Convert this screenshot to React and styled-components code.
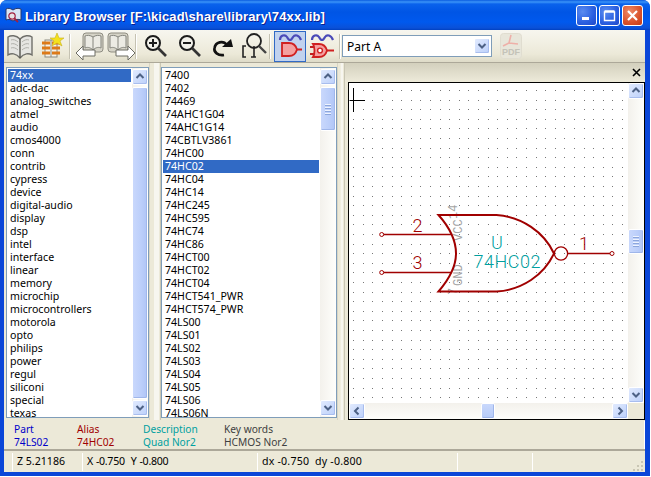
import React from 'react';
import styled, { createGlobalStyle } from 'styled-components';

const cream = '#ece9d8';
const uiFont = '"Noto Sans", "Liberation Sans", sans-serif';

const GlobalStyle = createGlobalStyle`
    html, body {
        margin: 0;
        background: #fff;
    }
    body {
        font-family: ${uiFont};
        font-size: 10.6px;
    }
`;

const Window = styled.div`
    width: 650px;
    height: 476px;
    display: flex;
    flex-flow: column nowrap;
    background: #0a46d8;
    border-radius: 7px 7px 0 0;
    overflow: hidden;
`;

const TitleBar = styled.div`
    height: 30px;
    flex: none;
    display: flex;
    align-items: center;
    padding: 0 7px 0 5px;
    background: linear-gradient(180deg, #0a5ce0 0, #3b94f8 2px, #0a62ec 4px, #0055e5 12px, #0059ee 22px, #0a50d8 28px, #0040c0 30px);
`;

const TitleText = styled.div`
    flex: 1;
    margin: 2px 0 0 3px;
    color: #fff;
    font: bold 13px "Liberation Sans", sans-serif;
    letter-spacing: .12px;
    white-space: nowrap;
    text-shadow: 1px 1px 0 #0f1e8c;
`;

const CaptionButton = styled.div`
    width: 21px;
    height: 21px;
    margin-left: 2px;
    box-sizing: border-box;
    border: 1px solid #fff;
    border-radius: 3px;
    display: flex;
    align-items: center;
    justify-content: center;
    background: ${props => props.$close
        ? 'radial-gradient(circle at 35% 30%, #ee8a68, #d9512a 60%, #c23a14)'
        : 'radial-gradient(circle at 30% 30%, #5a8cf0, #2a5fe0 60%, #1e48c8)'};
`;

const Client = styled.div`
    flex: 1;
    min-height: 0;
    margin: 0 5px 0 4px;
    display: flex;
    flex-flow: column nowrap;
    background: ${cream};
`;

const Toolbar = styled.div`
    height: 33px;
    flex: none;
    display: flex;
    align-items: center;
    box-sizing: border-box;
    background: linear-gradient(180deg, #f7f6ef, #ece9d8 75%, #dedbc8);
    border-bottom: 1px solid #aca899;
`;

const ToolButton = styled.div`
    width: ${props => props.$width || 32}px;
    height: 31px;
    flex: none;
    box-sizing: border-box;
    margin-left: ${props => props.$gap || 0}px;
    display: flex;
    align-items: center;
    justify-content: center;
    border: 1px solid ${props => props.$active ? '#316ac5' : 'transparent'};
    background: ${props => props.$active ? '#c1d2ee' : 'transparent'};
    & svg {
        flex: none;
    }
`;

const ToolSeparator = styled.div`
    width: 1px;
    height: 25px;
    flex: none;
    margin: 0 1px;
    background: #c5c2b2;
    border-right: 1px solid #fff;
`;

const Select = styled.div`
    width: 150px;
    height: 22px;
    flex: none;
    box-sizing: border-box;
    display: flex;
    align-items: center;
    justify-content: space-between;
    padding: 1px 1px 1px 4px;
    border: 1px solid #7f9db9;
    background: #fff;
    font-size: 12px;
    color: #000;
`;

const Main = styled.div`
    flex: 1;
    min-height: 0;
    display: flex;
`;

const ListColumn = styled.div`
    width: ${props => props.$width}px;
    flex: none;
    margin-left: ${props => props.$left || 0}px;
    padding: 4px 0 2px;
    box-sizing: border-box;
    display: flex;
`;

const ListBox = styled.div`
    flex: 1;
    min-width: 0;
    box-sizing: border-box;
    display: flex;
    border: 1px solid #7f9db9;
    background: #fff;
`;

const Rows = styled.div`
    flex: 1;
    min-width: 0;
    padding: 1px;
    overflow: hidden;
`;

const Row = styled.div`
    height: 13px;
    line-height: 13px;
    padding-left: 2px;
    white-space: nowrap;
    color: ${props => props.$selected ? '#fff' : '#000'};
    background: ${props => props.$selected ? '#316ac5' : 'transparent'};
`;

const Sash = styled.div`
    width: ${props => props.$width}px;
    flex: none;
    box-sizing: border-box;
    border-left: 1px solid #d8d5c4;
    border-right: 1px solid #c9c6b4;
    background: linear-gradient(90deg, ${cream} 40%, #f7f6ef 45%, #f7f6ef 85%, ${cream} 90%);
`;

const CanvasPane = styled.div`
    flex: 1;
    min-width: 0;
    display: flex;
    flex-flow: column nowrap;
    padding-left: 3px;
    background: linear-gradient(180deg, #d3d0bd 0, ${cream} 18px);
`;

const PaneHeader = styled.div`
    height: 19px;
    flex: none;
    display: flex;
    align-items: center;
    justify-content: flex-end;
    padding-right: 4px;
`;

const CanvasFrame = styled.div`
    flex: 1;
    min-height: 0;
    display: grid;
    grid-template-columns: 1fr 16px;
    grid-template-rows: 1fr 16px;
    border: 1px solid #000;
    background: ${cream};
`;

const Sheet = styled.svg`
    display: block;
    width: 279px;
    height: 320px;
    background: #fff;
`;

const VTrack = styled.div`
    width: 16px;
    flex: none;
    display: flex;
    flex-flow: column nowrap;
    padding-top: ${props => props.$inset || 0}px;
    padding-bottom: ${props => props.$inset || 0}px;
    background: linear-gradient(90deg, #f3f1ec, #fefefb);
`;

const HTrack = styled.div`
    height: 16px;
    display: flex;
    background: linear-gradient(180deg, #f3f1ec, #fefefb);
`;

const ScrollButton = styled.div`
    width: 16px;
    height: 16px;
    flex: none;
    box-sizing: border-box;
    display: flex;
    align-items: center;
    justify-content: center;
    border: 1px solid #fff;
    border-radius: 2px;
    background: linear-gradient(135deg, #e1eafe, #bcd0fa);
    box-shadow: inset -1px -1px 0 #a8bdee;
`;

const VThumb = styled.div`
    height: ${props => props.$size}px;
    margin-top: ${props => props.$offset}px;
    margin-bottom: auto;
    flex: none;
    box-sizing: border-box;
    display: flex;
    flex-flow: column nowrap;
    align-items: center;
    justify-content: center;
    gap: 1px;
    border: 1px solid #fff;
    border-radius: 2px;
    background: linear-gradient(90deg, #c9d8fc, #bbcefa 60%, #b0c5f6);
    box-shadow: inset -1px -1px 0 #9fb6ea;
`;

const HThumb = styled.div`
    width: ${props => props.$size}px;
    margin-left: ${props => props.$offset}px;
    margin-right: auto;
    flex: none;
    box-sizing: border-box;
    border: 1px solid #fff;
    border-radius: 2px;
    background: linear-gradient(180deg, #c9d8fc, #b6cbf8);
    box-shadow: inset -1px -1px 0 #9fb6ea;
`;

const GripLine = styled.div`
    width: 6px;
    height: 1px;
    background: #eef3fe;
    border-bottom: 1px solid #8ca6dc;
`;

const MessagePanel = styled.div`
    height: 28px;
    flex: none;
    margin-top: 1px;
    display: flex;
    padding-left: 10px;
    border-right: 1px solid #fff;
    line-height: 13px;
    font-size: 10.2px;
`;

const MessageCol = styled.div`
    width: ${props => props.$width}px;
    flex: none;
    color: ${props => props.$color};
    padding-top: 2px;
`;

const StatusBar = styled.div`
    height: 23px;
    flex: none;
    box-sizing: border-box;
    display: flex;
    align-items: stretch;
    padding-left: 8px;
    border-top: 2px solid #aca899;
    position: relative;
`;

const StatusField = styled.div`
    width: ${props => props.$width}px;
    flex: none;
    box-sizing: border-box;
    padding-left: 4px;
    margin: 2px 0 1px;
    line-height: 17px;
    letter-spacing: ${props => props.$spacing || 0}px;
    word-spacing: ${props => props.$words || 0}px;
    color: #000;
    border-left: 1px solid #fff;
    white-space: pre;
`;

const Grip = styled.svg`
    position: absolute;
    right: 1px;
    bottom: 0;
`;

const BottomEdge = styled.div`
    height: 4px;
    flex: none;
`;

const Chevron = ({ dir }) => {
    const paths = {
        up: 'M1.5 6 L5 2.5 L8.5 6',
        down: 'M1.5 3 L5 6.5 L8.5 3',
        left: 'M6.5 1.5 L3 5 L6.5 8.5',
        right: 'M3.5 1.5 L7 5 L3.5 8.5',
    };
    return (
        <svg width="10" height="10" viewBox="0 0 10 10">
            <path d={paths[dir]} fill="none" stroke="#4d6185" strokeWidth="2" />
        </svg>
    );
};

function VScroll({ offset, size, grip, inset }) {
    return (
        <VTrack $inset={inset}>
            <ScrollButton><Chevron dir="up" /></ScrollButton>
            <VThumb $offset={offset} $size={size}>
                {grip && <><GripLine /><GripLine /><GripLine /><GripLine /></>}
            </VThumb>
            <ScrollButton><Chevron dir="down" /></ScrollButton>
        </VTrack>
    );
}

const BookIcon = () => (
    <svg width="28" height="28" viewBox="0 0 28 28">
        <path d="M14 7 C10 3 5 3 2 5 L2 23 C5 21 10 21 14 26 C18 21 23 21 26 23 L26 5 C23 3 18 3 14 7 Z" fill="#e6e6e2" stroke="#6f6f6a" strokeWidth="1.4" />
        <path d="M14 7 L14 26" stroke="#55554f" strokeWidth="1.4" />
        <path d="M5 8 C7 7 10 8 12 10 M5 12 C7 11 10 12 12 14 M5 16 C7 15 10 16 12 18 M23 8 C21 7 18 8 16 10 M23 12 C21 11 18 12 16 14 M23 16 C21 15 18 16 16 18" stroke="#b0b0aa" fill="none" />
    </svg>
);

const LibNewIcon = () => (
    <svg width="26" height="28" viewBox="0 0 26 28">
        <rect x="6" y="8" width="12" height="17" fill="#f4f2ea" stroke="#8a8a80" />
        <path d="M12 8 V25" stroke="#8a8a80" />
        <path d="M3 11 H11 M3 16 H11 M3 21 H11 M13 11 H21 M13 16 H21 M13 21 H21" stroke="#dd7a18" strokeWidth="3" />
        <path d="M18 1 L20 6 L25 6 L21 9 L23 14 L18 11 L13 14 L15 9 L11 6 L16 6 Z" fill="#f5e21c" stroke="#c8b020" strokeWidth=".6" />
    </svg>
);

const BookArrowIcon = ({ flip }) => (
    <svg width="30" height="30" viewBox="0 0 30 30">
        <g transform={flip ? 'translate(30 0) scale(-1 1)' : undefined}>
            <rect x="8" y="2" width="20" height="19" rx="3" fill="#d6d4c8" stroke="#8f8d82" />
            <path d="M18 6 C15 4 12 4 10 5 L10 17 C12 16 15 16 18 19 C21 16 24 16 26 17 L26 5 C24 4 21 4 18 6 Z" fill="#ecebe4" stroke="#84847c" />
            <path d="M18 6 V19" stroke="#84847c" />
            <path d="M1 22 L8 15 L8 19 L20 19 L20 25 L8 25 L8 29 Z" fill="#fff" stroke="#6c6c64" strokeLinejoin="round" />
        </g>
    </svg>
);

const ZoomIcon = ({ sign }) => (
    <svg width="24" height="24" viewBox="0 0 24 24">
        <circle cx="9" cy="9" r="7" fill="#f2f1ea" stroke="#1c1c1c" strokeWidth="2" />
        <path d="M14 14 L22 22" stroke="#333" strokeWidth="2.6" />
        <path d="M5 9 H13" stroke="#1c1c1c" strokeWidth="2" />
        {sign === 'plus' && <path d="M9 5 V13" stroke="#1c1c1c" strokeWidth="2" />}
    </svg>
);

const RedoIcon = () => (
    <svg width="24" height="24" viewBox="0 0 24 24">
        <path d="M13 21 C7 22 2.5 18 3.5 14 C4.5 8 12 6 16 11" fill="none" stroke="#111" strokeWidth="2.6" />
        <path d="M11 13 L22 13 L20 5 Z" fill="#111" />
    </svg>
);

const ZoomBoxIcon = () => (
    <svg width="26" height="28" viewBox="0 0 26 28">
        <circle cx="13" cy="9" r="7" fill="none" stroke="#222" strokeWidth="1.8" />
        <path d="M18 14 L25 21" stroke="#444" strokeWidth="2.4" />
        <path d="M5 14 H2 V25 H5 M13 14 V25 M10 25 H15" fill="none" stroke="#222" strokeWidth="1.6" />
    </svg>
);

const GateIcon = ({ bubble }) => (
    <svg width="28" height="28" viewBox="0 0 28 28">
        <path d="M4 8 C4 3 9 2 11 5 C13 9 15 9 17 5 C19 2 23 3 25 8" fill="none" stroke="#4a4ab8" strokeWidth="2.2" />
        {bubble && <path d="M2 15 H7 M2 22 H7" stroke="#c02020" strokeWidth="2" />}
        <path d={bubble ? 'M5 12 H11 C15 12 18 15 19 18.5 C18 22 15 25 11 25 H5 C7 22 7 15 5 12 Z' : 'M6 11 H13 C17 11 20 14 21 17.5 C20 21 17 24 13 24 H6 Z'} fill="#f4a0a0" stroke="#d02020" strokeWidth="1.8" />
        <path d={bubble ? 'M19 18.5 H26' : 'M21 17.5 H26'} stroke="#d02020" strokeWidth="2" />
        {bubble && <circle cx="12" cy="18.5" r="2.4" fill="#fff" stroke="#d02020" strokeWidth="1.4" />}
    </svg>
);

const PdfIcon = () => (
    <svg width="22" height="26" viewBox="0 0 22 26">
        <rect x=".5" y=".5" width="21" height="25" rx="3" fill="#e8e6da" stroke="#e0ddd0" />
        <path d="M11 2 L9 10 L3 13 M9 10 L18 11" fill="none" stroke="#eeb0a8" strokeWidth="1.6" />
        <text x="11" y="22" textAnchor="middle" fontSize="9" fontFamily="Liberation Sans, sans-serif" fontWeight="bold" fill="#c4c2b8">PDF</text>
    </svg>
);

const AppIcon = () => (
    <svg width="17" height="17" viewBox="0 0 17 17">
        <path d="M8 3 C5 1 3 1 1 2 L1 13 C3 12 5 12 8 14 C11 12 13 12 16 13 L16 2 C13 1 11 1 8 3 Z" fill="#d8e4f4" stroke="#25386e" />
        <circle cx="7" cy="9" r="3.2" fill="#e8e0e4" stroke="#a02040" strokeWidth="1.2" />
        <path d="M9 11 L13 15" stroke="#a02040" strokeWidth="1.8" />
    </svg>
);

const dots = [];
for (let i = -1; i < 28; i++) {
    for (let j = 0; j < 33; j++) {
        dots.push([Math.round(362.7 + i * 9.6), Math.round(90 + j * 9.6)]);
    }
}

const RED = '#a00000';
const TEAL = '#00a0a0';
const GRAY = '#a4a4a4';
const THIN = 'Roboto, "Liberation Sans", sans-serif';
const MONO = '"Liberation Mono", monospace';

const FieldLabel = styled.text`
    font-family: ${THIN};
    font-weight: 300;
    text-anchor: middle;
    font-size: ${props => props.$size}px;
    fill: ${props => props.$color};
`;

const PinName = styled.text`
    font-family: ${MONO};
    font-size: 12px;
    fill: ${GRAY};
`;

function Schematic() {
    return (
        <Sheet viewBox="349 83 279 320">
            {dots.map(([x, y]) => (
                <rect key={`${x}-${y}`} x={x} y={y} width="1" height="1" fill="#777" />
            ))}
            <path d="M349.5 100.5 H365 M353.5 88 V112" stroke="#000" fill="none" />

            <path d="M382 234.5 H452 M382 272.5 H452 M568 253.5 H612" stroke={RED} strokeWidth="1.3" fill="none" />
            <circle cx="381.7" cy="234.5" r="2" fill="#fff" stroke={RED} />
            <circle cx="381.7" cy="272.5" r="2" fill="#fff" stroke={RED} />
            <circle cx="612" cy="253.5" r="2" fill="#fff" stroke={RED} />
            <circle cx="561" cy="253.5" r="6.6" fill="none" stroke={RED} strokeWidth="1.3" />

            <FieldLabel x="417.5" y="232" $size={18} $color={RED}>2</FieldLabel>
            <FieldLabel x="417.5" y="269" $size={18} $color={RED}>3</FieldLabel>
            <FieldLabel x="584" y="250" $size={18} $color={RED}>1</FieldLabel>

            <PinName transform="translate(457 219) rotate(-90)">14</PinName>
            <PinName transform="translate(462 241) rotate(-90)">VCC</PinName>
            <PinName transform="translate(462 286) rotate(-90)">GND</PinName>
            <PinName transform="translate(457 295) rotate(-90)">7</PinName>

            <path d="M438.5 215 H496.5 C522 217 544 232 554 253.5 C544 275 522 290 496.5 291.5 H438.5 C451 277 456 265 456 253.5 C456 242 451 229 438.5 215 Z" fill="none" stroke={RED} strokeWidth="2" />

            <FieldLabel x="497" y="249" $size={18} $color={TEAL}>U</FieldLabel>
            <FieldLabel x="507" y="268" $size={18} $color={TEAL} textLength="67">74HC02</FieldLabel>
        </Sheet>
    );
}

const libraries = ['74xx', 'adc-dac', 'analog_switches', 'atmel', 'audio', 'cmos4000', 'conn', 'contrib', 'cypress', 'device', 'digital-audio', 'display', 'dsp', 'intel', 'interface', 'linear', 'memory', 'microchip', 'microcontrollers', 'motorola', 'opto', 'philips', 'power', 'regul', 'siliconi', 'special', 'texas'];
const parts = ['7400', '7402', '74469', '74AHC1G04', '74AHC1G14', '74CBTLV3861', '74HC00', '74HC02', '74HC04', '74HC14', '74HC245', '74HC595', '74HC74', '74HC86', '74HCT00', '74HCT02', '74HCT04', '74HCT541_PWR', '74HCT574_PWR', '74LS00', '74LS01', '74LS02', '74LS03', '74LS04', '74LS05', '74LS06', '74LS06N'];

export default function App() {
    return (
        <Window>
            <GlobalStyle />
            <TitleBar>
                <AppIcon />
                <TitleText>{'Library Browser [F:\\kicad\\share\\library\\74xx.lib]'}</TitleText>
                <CaptionButton>
                    <svg width="13" height="13" viewBox="0 0 13 13"><rect x="2" y="8" width="7" height="3" fill="#fff" /></svg>
                </CaptionButton>
                <CaptionButton>
                    <svg width="13" height="13" viewBox="0 0 13 13"><path d="M1.5 3 H11.5 V11.5 H1.5 Z M1.5 2 H11.5" fill="none" stroke="#fff" strokeWidth="1.4" /></svg>
                </CaptionButton>
                <CaptionButton $close>
                    <svg width="13" height="13" viewBox="0 0 13 13"><path d="M2 2 L11 11 M11 2 L2 11" stroke="#fff" strokeWidth="2.2" /></svg>
                </CaptionButton>
            </TitleBar>
            <Client>
                <Toolbar>
                    <ToolButton><BookIcon /></ToolButton>
                    <ToolButton><LibNewIcon /></ToolButton>
                    <ToolSeparator />
                    <ToolButton $width={36}><BookArrowIcon /></ToolButton>
                    <ToolButton $width={26}><BookArrowIcon flip /></ToolButton>
                    <ToolSeparator />
                    <ToolButton $width={36}><ZoomIcon sign="plus" /></ToolButton>
                    <ToolButton><ZoomIcon sign="minus" /></ToolButton>
                    <ToolButton $width={34}><RedoIcon /></ToolButton>
                    <ToolButton $width={28}><ZoomBoxIcon /></ToolButton>
                    <ToolSeparator />
                    <ToolButton $active $gap={2}><GateIcon /></ToolButton>
                    <ToolButton><GateIcon bubble /></ToolButton>
                    <ToolSeparator />
                    <Select>
                        Part A
                        <ScrollButton><Chevron dir="down" /></ScrollButton>
                    </Select>
                    <ToolButton $width={38}><PdfIcon /></ToolButton>
                </Toolbar>
                <Main>
                    <ListColumn $width={143} $left={2}>
                        <ListBox>
                            <Rows>
                                {libraries.map(name => <Row key={name} $selected={name === '74xx'}>{name}</Row>)}
                            </Rows>
                            <VScroll offset={2} size={312} inset={1} />
                        </ListBox>
                    </ListColumn>
                    <Sash $width={12} />
                    <ListColumn $width={176}>
                        <ListBox>
                            <Rows>
                                {parts.map(name => <Row key={name} $selected={name === '74HC02'}>{name}</Row>)}
                            </Rows>
                            <VScroll offset={2} size={44} grip inset={1} />
                        </ListBox>
                    </ListColumn>
                    <Sash $width={8} />
                    <CanvasPane>
                        <PaneHeader>
                            <svg width="9" height="9" viewBox="0 0 9 9"><path d="M1 1 L8 8 M8 1 L1 8" stroke="#000" strokeWidth="1.6" /></svg>
                        </PaneHeader>
                        <CanvasFrame>
                            <Schematic />
                            <VScroll offset={130} size={25} grip />
                            <HTrack>
                                <ScrollButton><Chevron dir="left" /></ScrollButton>
                                <HThumb $offset={116} $size={14} />
                                <ScrollButton><Chevron dir="right" /></ScrollButton>
                            </HTrack>
                        </CanvasFrame>
                    </CanvasPane>
                </Main>
                <MessagePanel>
                    <MessageCol $width={63} $color="#0000c8">Part<br />74LS02</MessageCol>
                    <MessageCol $width={66} $color="#a00000">Alias<br />74HC02</MessageCol>
                    <MessageCol $width={81} $color="#00a0a0">Description<br />Quad Nor2</MessageCol>
                    <MessageCol $width={120} $color="#404040">Key words<br />HCMOS Nor2</MessageCol>
                </MessagePanel>
                <StatusBar>
                    <StatusField $width={70}>Z 5.21186</StatusField>
                    <StatusField $width={175} $spacing={-0.3} $words={0.6}>{'X -0.750  Y -0.800'}</StatusField>
                    <StatusField $width={200} $spacing={0.2}>{'dx -0.750  dy -0.800'}</StatusField>
                    <StatusField $width={75} />
                    <StatusField $width={100} />
                    <Grip width="12" height="12" viewBox="0 0 12 12">
                        <path d="M9 1 h2 v2 h-2 Z M5 5 h2 v2 h-2 Z M9 5 h2 v2 h-2 Z M1 9 h2 v2 h-2 Z M5 9 h2 v2 h-2 Z M9 9 h2 v2 h-2 Z" fill="#c9c6b4" />
                    </Grip>
                </StatusBar>
            </Client>
            <BottomEdge />
        </Window>
    );
}
